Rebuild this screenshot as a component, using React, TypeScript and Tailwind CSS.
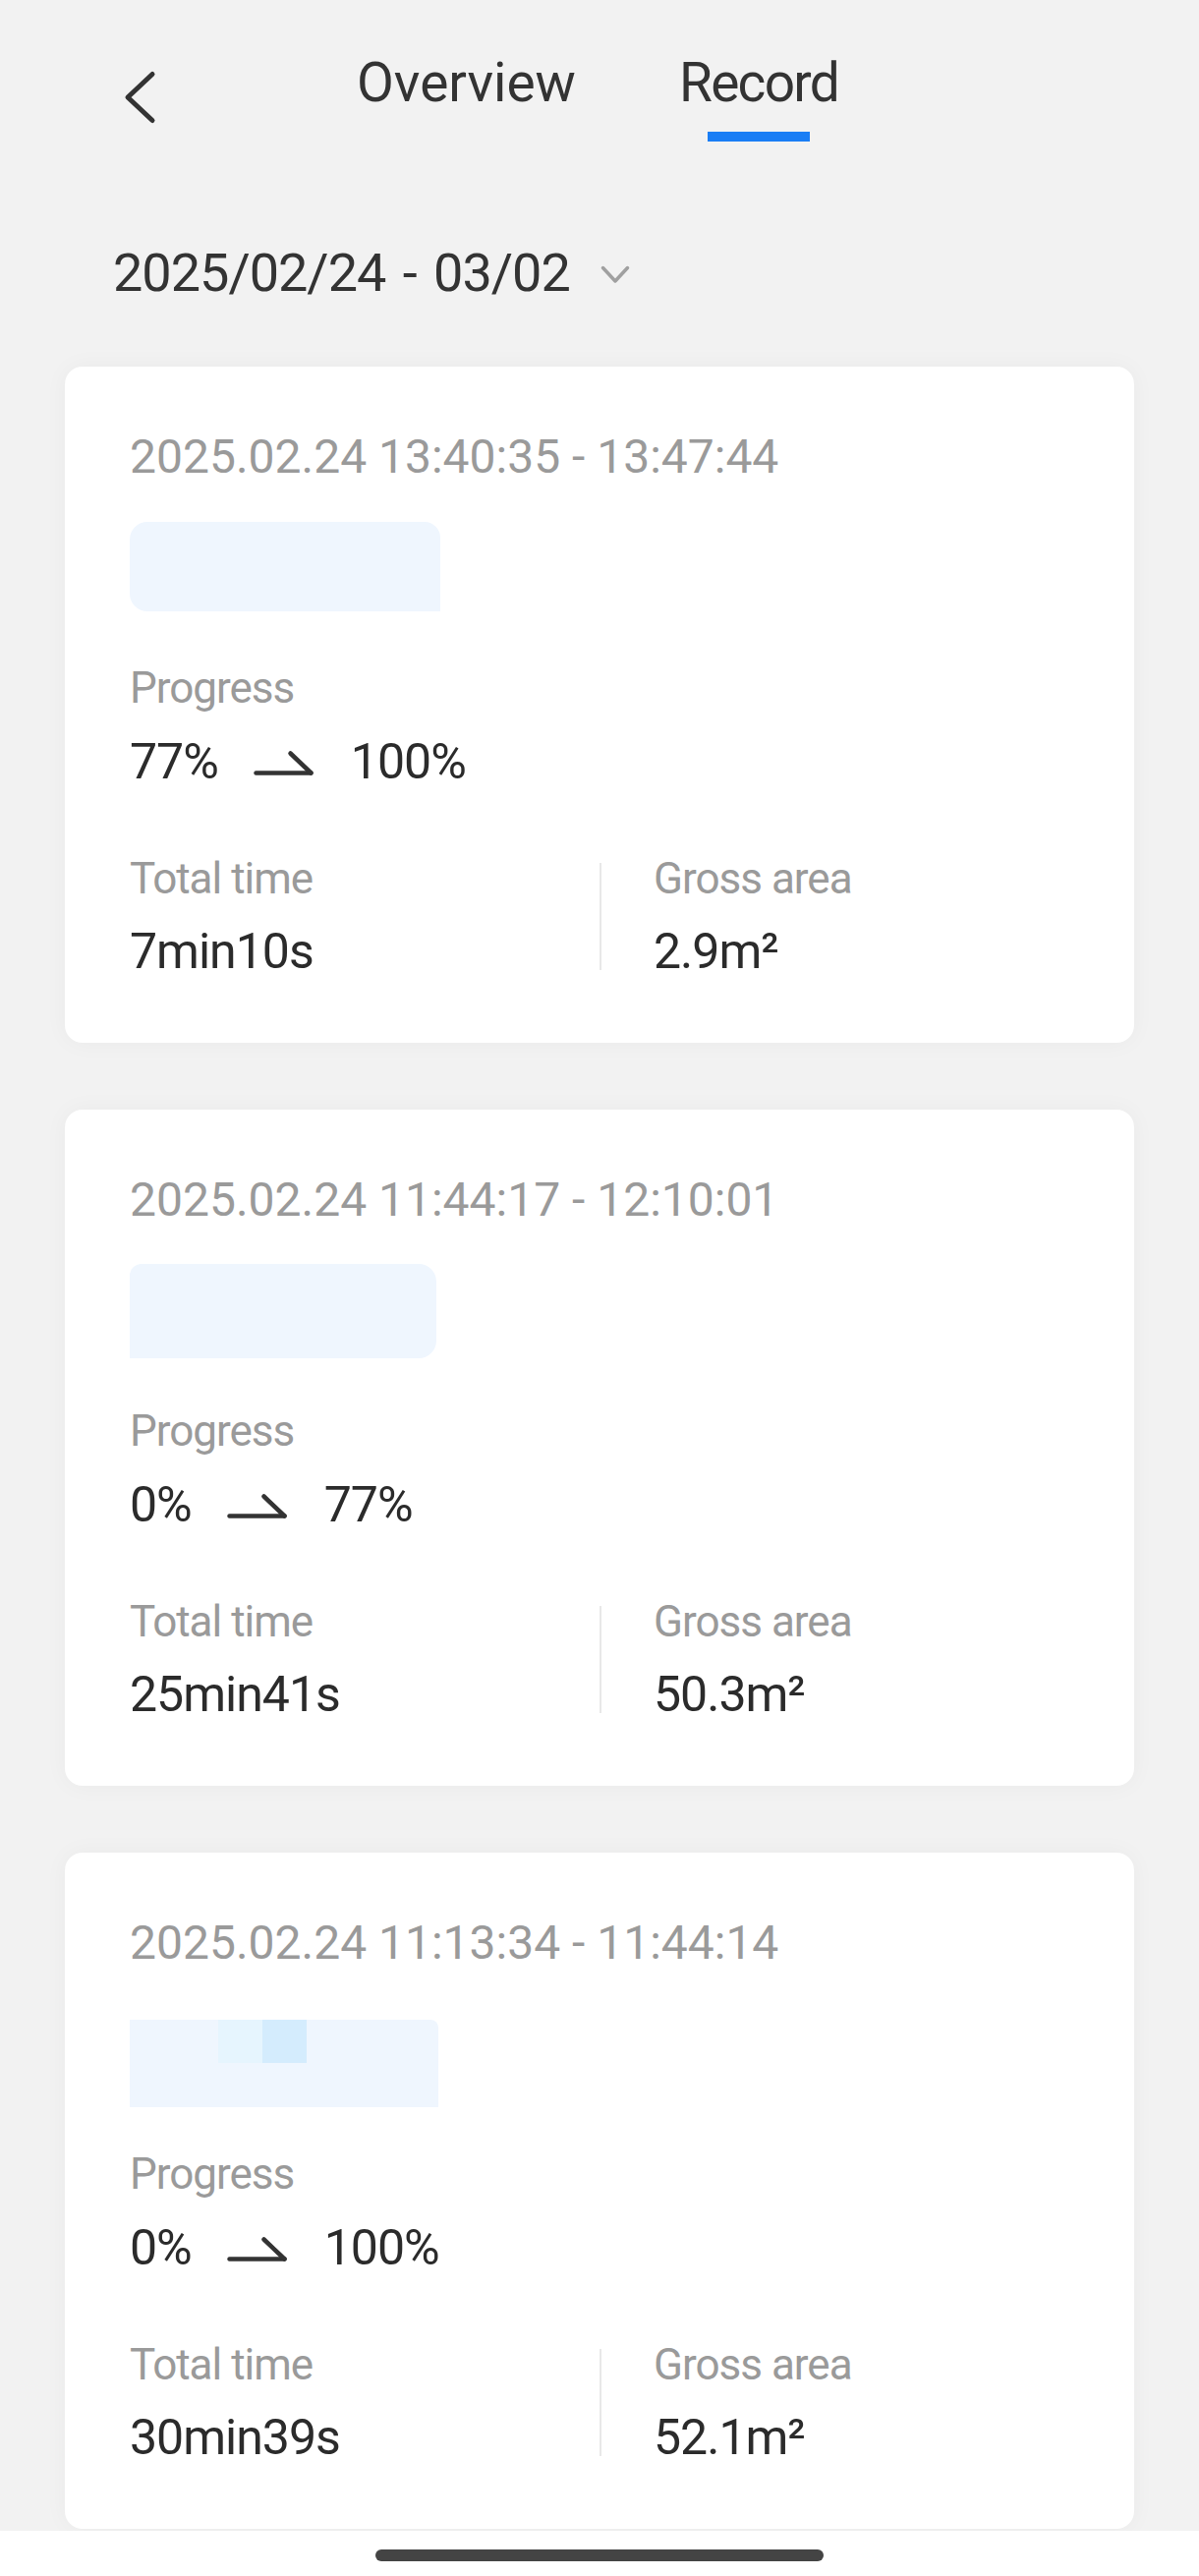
import React from "react";

type Rec = {
  time: string;
  from: string;
  to: string;
  total: string;
  area: string;
  variant: number;
};

const records: Rec[] = [
  { time: "2025.02.24 13:40:35 - 13:47:44", from: "77%", to: "100%", total: "7min10s", area: "2.9m²", variant: 0 },
  { time: "2025.02.24 11:44:17 - 12:10:01", from: "0%", to: "77%", total: "25min41s", area: "50.3m²", variant: 1 },
  { time: "2025.02.24 11:13:34 - 11:44:14", from: "0%", to: "100%", total: "30min39s", area: "52.1m²", variant: 2 },
];

function Harpoon() {
  return (
    <svg width="62" height="27" viewBox="0 0 62 27" fill="none" className="ml-[36px] mr-[37px] mt-[2px]">
      <path d="M2.5 23.5 H58.5" stroke="#333" strokeWidth="4.5" strokeLinecap="round" />
      <path d="M37.5 3.5 L58.5 23.5" stroke="#333" strokeWidth="4.5" strokeLinecap="round" />
    </svg>
  );
}

function Redacted({ variant }: { variant: number }) {
  if (variant === 2) {
    return (
      <div className="mt-[54px] h-[89px] w-[314px] bg-[#eff6fe] rounded-tr-[8px] flex">
        <div className="ml-[90px] h-[44px] w-[45px] bg-[#e6f5fe]" />
        <div className="h-[44px] w-[45px] bg-[#d4ecfd]" />
      </div>
    );
  }
  if (variant === 1) {
    return <div className="mt-[41px] h-[96px] w-[312px] bg-[#eff6fe] rounded-tr-[18px] rounded-br-[18px] rounded-tl-[12px]" />;
  }
  return <div className="mt-[42px] h-[91px] w-[316px] bg-[#eff6fe] rounded-tl-[18px] rounded-bl-[18px] rounded-tr-[16px]" />;
}

function Card({ r }: { r: Rec }) {
  const progressMt = r.variant === 0 ? "mt-[56px]" : r.variant === 1 ? "mt-[52px]" : "mt-[46px]";
  return (
    <div className="bg-white rounded-[18px] shadow-[0_0_24px_rgba(0,0,0,0.04)] pt-[68px] pb-[68px] px-[66px]">
      <div className="text-[48px] leading-none text-[#9a9a9a]">{r.time}</div>
      <Redacted variant={r.variant} />
      <div className={`${progressMt} text-[44px] leading-none tracking-[-1px] text-[#9a9a9a]`}>Progress</div>
      <div className="mt-[28px] flex items-center text-[50px] leading-none tracking-[-1px] text-[#2b2b2b]">
        <span>{r.from}</span>
        <Harpoon />
        <span>{r.to}</span>
      </div>
      <div className="mt-[72px] flex">
        <div className="w-[478px]">
          <div className="text-[44px] leading-none tracking-[-1px] text-[#9a9a9a]">Total time</div>
          <div className="mt-[27px] text-[50px] leading-none tracking-[-1px] text-[#2b2b2b]">{r.total}</div>
        </div>
        <div className="w-[2px] bg-[#e8e8e8] my-[6px]" />
        <div className="pl-[53px]">
          <div className="text-[44px] leading-none tracking-[-1px] text-[#9a9a9a]">Gross area</div>
          <div className="mt-[27px] text-[50px] leading-none tracking-[-1px] text-[#2b2b2b]">{r.area}</div>
        </div>
      </div>
    </div>
  );
}

export default function App() {
  return (
    <div className="w-full bg-[#f2f2f2] flex flex-col" style={{ fontFamily: "Roboto, 'Noto Sans', sans-serif" }}>
      <div className="flex items-start pt-[57px]">
        <svg width="34" height="56" viewBox="0 0 34 56" fill="none" className="ml-[125px] mt-[14px]">
          <path d="M30 4.5 L5 28 L30 51.5" stroke="#333" strokeWidth="5" strokeLinecap="round" strokeLinejoin="round" />
        </svg>
        <div className="ml-[204px] text-[55px] leading-none text-[#333]">Overview</div>
        <div className="ml-[105px] flex flex-col items-center">
          <div className="text-[55px] leading-none tracking-[-1.7px] text-[#333]">Record</div>
          <div className="mt-[22px] h-[10px] w-[104px] bg-[#1a7ef5]" />
        </div>
      </div>
      <div className="mt-[107px] ml-[115px] flex items-center">
        <span className="text-[54px] leading-none tracking-[-1px] [word-spacing:5px] text-[#333]">2025/02/24 - 03/02</span>
        <svg width="30" height="20" viewBox="0 0 30 20" fill="none" className="ml-[31px] mt-[4px]">
          <path d="M2.5 2.5 L15 16 L27.5 2.5" stroke="#a0a0a0" strokeWidth="3.5" strokeLinecap="round" strokeLinejoin="round" />
        </svg>
      </div>
      <div className="mt-[68px] mx-[66px] flex flex-col gap-[68px]">
        {records.map((r, i) => (
          <Card key={i} r={r} />
        ))}
      </div>
      <div className="mt-[2px] h-[49px] bg-white pt-[19px]">
        <div className="mx-auto h-[12px] w-[456px] rounded-full bg-[#444]" />
      </div>
    </div>
  );
}
